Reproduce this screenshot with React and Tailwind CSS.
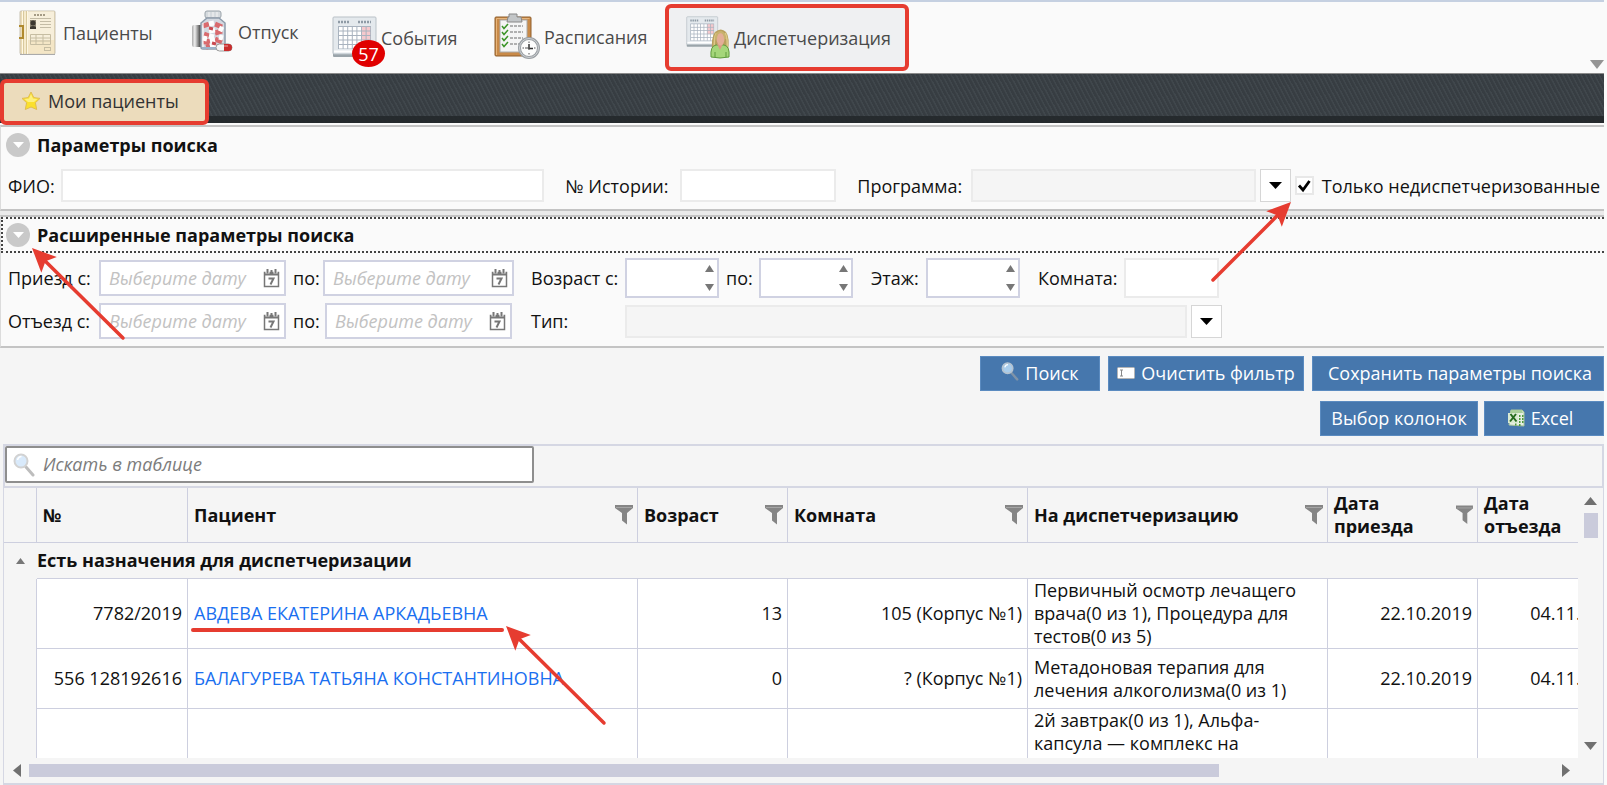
import { useState } from "react";

const columns = [
  { key: "number", title: "№", filter: false, align: "text-right" },
  { key: "patient", title: "Пациент", filter: true, align: "text-left" },
  { key: "age", title: "Возраст", filter: true, align: "text-right" },
  { key: "room", title: "Комната", filter: true, align: "text-right" },
  { key: "tasks", title: "На диспетчеризацию", filter: true, align: "text-left" },
  { key: "arrival", title: "Дата приезда", filter: true, align: "text-right" },
  { key: "departure", title: "Дата отъезда", filter: true, align: "text-right" }
];

const rows = [
  {
    number: "7782/2019",
    patient: "АВДЕВА ЕКАТЕРИНА АРКАДЬЕВНА",
    age: "13",
    room: "105 (Корпус №1)",
    tasks: "Первичный осмотр лечащего врача(0 из 1), Процедура для тестов(0 из 5)",
    arrival: "22.10.2019",
    departure: "04.11.2019",
    valign: "align-middle"
  },
  {
    number: "556 128192616",
    patient: "БАЛАГУРЕВА ТАТЬЯНА КОНСТАНТИНОВНА",
    age: "0",
    room: "? (Корпус №1)",
    tasks: "Метадоновая терапия для лечения алкоголизма(0 из 1)",
    arrival: "22.10.2019",
    departure: "04.11.2019",
    valign: "align-middle"
  },
  {
    number: "",
    patient: "",
    age: "",
    room: "",
    tasks: "2й завтрак(0 из 1), Альфа-капсула — комплекс на",
    arrival: "",
    departure: "",
    valign: "align-top"
  }
];

/* ---------- Icons ---------- */

function PatientsIcon() {
  return (
    <svg width="37" height="46" viewBox="0 0 37 46">
      <rect x="1" y="1" width="35" height="43" rx="1" fill="#ecdcb4" stroke="#c9c2b2" />
      <rect x="8" y="1.500" width="27" height="42" fill="#f7efdb" />
      <path d="M8 30h27v13.500H8z" fill="#f2e3bd" opacity=".7" />
      <path d="M3.500 1v43M6 1v43M8.500 1v43" stroke="#fff8e4" />
      <path d="M4.500 1v43M7.500 1v43" stroke="#d9c99c" />
      <path d="M0 16h4v12H0" fill="none" stroke="#b08a2e" strokeWidth="2" />
      <path d="M15 5h12" stroke="#8a8069" strokeWidth="1.500" strokeDasharray="2 1" />
      <path d="M11 8.500h21M21 11.500h11M21 14.500h11M21 17.500h11" stroke="#c4bca6" />
      <rect x="11" y="10" width="6" height="9" fill="#8c8471" />
      <circle cx="14" cy="13" r="2.500" fill="#3d382f" />
      <path d="M11 19v-2q3-2 6 0v2z" fill="#3d382f" />
      <path d="M11.500 24.500h20v10h-20zM11.500 28h20M11.500 31h20M17 24.500v10M24 24.500v10" fill="none" stroke="#c6bda2" />
      <rect x="25.500" y="37.500" width="6" height="3" fill="none" stroke="#c6bda2" />
      <path d="M1 44.500h35" stroke="#aaa" />
    </svg>
  );
}

function PillsIcon() {
  return (
    <svg width="42" height="44" viewBox="0 0 42 44">
      <defs>
        <linearGradient id="cap">
          <stop offset="0" stopColor="#aaa" />
          <stop offset=".2" stopColor="#eee" />
          <stop offset=".6" stopColor="#444" />
          <stop offset="1" stopColor="#222" />
        </linearGradient>
      </defs>
      <rect x="1" y="15" width="14" height="22" rx="2" fill="url(#cap)" />
      <rect x="14" y="1" width="16" height="7" rx="2" fill="#d5dade" stroke="#9aa3aa" />
      <path d="M18 2v5M22 2v5M26 2v5" stroke="#f4f4f4" />
      <path d="M16 8h12l6 5v24q0 2-2 2H12q-2 0-2-2V13z" fill="#d3d8e0" stroke="#8e9cab" strokeWidth="1.500" />
      <g strokeWidth="5">
        <path d="M12 16l6-2M24 14l7 3M13 24l5 2M24 23l7-2M12 32l7-1M24 29l7 3M15 37l4-1M26 37l5-1" stroke="#d96a6e" />
        <path d="M18 14l5-1M28 18l4 2M18 26l5 1M18 21l6-1M19 31l5-1M28 27l4 1M19 36l6-1M12 28l4 1" stroke="#fdfdfd" />
        <path d="M18 18l4 1M21 33l4 1" stroke="#c94a50" strokeWidth="3" />
      </g>
      <path d="M12 13v24" stroke="#fff" strokeWidth="1.500" opacity=".7" />
      <path d="M11 38h22" stroke="#9db2c8" strokeWidth="2" />
      <rect x="25" y="34" width="16" height="7" rx="3.500" fill="#f4f4f4" stroke="#999" />
      <path d="M33 34h4.500a3.500 3.500 0 0 1 0 7H33z" fill="#c92c2c" />
      <path d="M27 36h10" stroke="#fff" opacity=".6" />
    </svg>
  );
}

function CalendarDrawing() {
  return (
    <g>
      <path d="M1 36h43v4q0 1-1 1H2q-1 0-1-1z" fill="#9aa4aa" />
      <rect x="1" y="1" width="43" height="37" rx="1" fill="#e4e9ed" stroke="#b9c1c7" />
      <path d="M2 35.500h41" stroke="#fff" strokeWidth="2" />
      <path d="M6 6h11M26 6h13" stroke="#8f9ba6" strokeWidth="2.500" strokeDasharray="2 1" />
      <rect x="6" y="10" width="33" height="23" fill="#a9b3bf" />
      <g fill="#fff">
        {[0, 1, 2, 3, 4].map((r) =>
          [0, 1, 2, 3, 4, 5, 6].map((c) => (
            <rect
              key={r + "-" + c}
              x={7 + c * 4.6}
              y={11 + r * 4.5}
              width="3.600"
              height="3.500"
              fill={c > 4 && r < 3 ? "#f6c9cd" : "#fff"}
            />
          ))
        )}
      </g>
    </g>
  );
}

function EventsIcon() {
  return (
    <svg width="45" height="43" viewBox="0 0 45 43">
      <CalendarDrawing />
    </svg>
  );
}

function ScheduleIcon() {
  return (
    <svg width="46" height="47" viewBox="0 0 46 47">
      <rect x="1" y="4" width="36" height="39" rx="1" fill="#c98a48" stroke="#8f5f2c" />
      <path d="M2.500 42V5.500h33" fill="none" stroke="#e7b57b" />
      <rect x="6" y="7" width="27" height="32" fill="#f5f5f5" stroke="#aaa" />
      <path d="M15 1h8v3h4l1 5H13l1-5h1z" fill="#c3c6c8" stroke="#888" />
      <path d="M8 13l2 2.500 4-4.500M8 19l2 2.500 4-4.500M8 25l2 2.500 4-4.500M8 31l2 2.500 4-4.500" fill="none" stroke="#3b9427" strokeWidth="1.500" />
      <path d="M16 13h13M16 19h13M16 25h13M16 31h9" stroke="#999" strokeWidth="1.500" strokeDasharray="3 1" />
      <circle cx="35" cy="35" r="9.500" fill="#fdfdfd" stroke="#9a9fa3" strokeWidth="3" />
      <circle cx="35" cy="35" r="9.500" fill="none" stroke="#cfd2d5" />
      <path d="M35 31v4.500h4" fill="none" stroke="#333" strokeWidth="1.500" />
      <path d="M35 28.500v1.500M35 40v1.500M28.500 35h1.500M40 35h1.500M31 35h4v2" fill="none" stroke="#555" />
    </svg>
  );
}

function DispatchIcon() {
  return (
    <svg width="44" height="43" viewBox="0 0 44 43">
      <g transform="scale(.72 .75)">
        <CalendarDrawing />
      </g>
      <path d="M26 36q-1-15 3-20 6-5 11 0 4 5 2 20z" fill="#b9a05e" />
      <path d="M28.500 34q-1-12 2-17M41 33q1-11-2-16" fill="none" stroke="#dcc987" strokeWidth="1.500" />
      <path d="M25 41q-1-11 5-12h8q6 1 5 12-9 2-18 0z" fill="#a5d67a" stroke="#5f9a3c" />
      <path d="M31 28h6l-3 6z" fill="#d79b82" />
      <ellipse cx="34.500" cy="23" rx="4" ry="6.500" fill="#e3ae97" />
      <path d="M30 23q0-7 5-7 4 1 4 7" fill="none" stroke="#c9b26e" strokeWidth="2" />
      <path d="M29 41v-5M40 41v-5" stroke="#5f9a3c" />
    </svg>
  );
}

function StarIcon() {
  return (
    <svg width="20" height="20" viewBox="0 0 20 20">
      <path
        d="M10 1l2.800 5.600 6.200.8-4.600 4.300 1.300 6.800L10 16l-5.700 2.500 1.300-6.800L1 7.400l6.200-.8z"
        fill="#fbe02c"
        stroke="#e0bd52"
        strokeLinejoin="round"
      />
      <path d="M10 3l2 4.500 4.500.5-3.500 3H7L3.500 8 8 7.500z" fill="#fff6a0" opacity=".7" />
    </svg>
  );
}

function MagnifierIcon({ light, className }) {
  return (
    <svg viewBox="0 0 22 25" className={className}>
      <path d="M13 15l7 8" stroke={light ? "#bdbdbd" : "#7f93a8"} strokeWidth="3" strokeLinecap="round" />
      <circle cx="8" cy="9" r="6.500" fill={light ? "#d9eafb" : "#a9cdec"} stroke={light ? "#d2d2d2" : "#b5c3d0"} strokeWidth="2" />
      <path d="M4.500 8q1-3.500 4-3.500" fill="none" stroke="#fff" strokeWidth="1.500" />
    </svg>
  );
}

function ClearIcon() {
  return (
    <svg width="18" height="12" viewBox="0 0 18 12">
      <rect x=".5" y=".5" width="17" height="11" rx="1" fill="#fff" stroke="#b5b5b5" />
      <path d="M3 3h3M3 9h3M4.500 3v6" stroke="#888" />
    </svg>
  );
}

function ExcelIcon() {
  return (
    <svg width="18" height="18" viewBox="0 0 18 18">
      <path d="M4 1h11l2 2v14L2 16z" fill="#e6efe2" stroke="#a8c49c" />
      <path d="M4 1h11l1 3H3z" fill="#a9cf9a" />
      <rect x="1" y="4" width="10" height="10" fill="#d9ead2" />
      <path d="M3.500 5l6 7.500M9 5l-6 7.500" stroke="#256b1e" strokeWidth="2" />
      <path d="M12 7h1.500M15 7h1.500M12 10h1.500M15 10h1.500M12 13h1.500M15 13h1.500M8 15.500h1.500M12 16h1.500" stroke="#4f9a3c" strokeWidth="2" />
    </svg>
  );
}

function DateIcon() {
  return (
    <svg width="17" height="20" viewBox="0 0 17 20">
      <path d="M1.500 4.500h14v14h-14z" fill="#fff" stroke="#777" strokeWidth="1.500" />
      <path d="M1 4h15v3.500H1z" fill="#777" />
      <path d="M4.500 0v5.500M12.500 0v5.500" stroke="#fff" strokeWidth="4" />
      <path d="M4.500 1v4.500M12.500 1v4.500" stroke="#777" strokeWidth="2" />
      <path d="M8.500 2v4" stroke="#777" strokeWidth="2" />
      <path d="M5.500 10.500h5l-3 6" fill="none" stroke="#777" strokeWidth="2" />
    </svg>
  );
}

function FilterIcon() {
  return (
    <svg width="18" height="20" viewBox="0 0 18 20">
      <path d="M0 0h18v3l-6 5v11.500l-5-4V8L0 3z" fill="#858585" />
      <path d="M1 2.500h16" stroke="#a5a5a5" />
    </svg>
  );
}

function Triangle({ dir, className }) {
  const points = {
    up: "0,8 5,0 10,8",
    down: "0,0 10,0 5,8",
    left: "8,0 8,10 0,5",
    right: "0,0 8,5 0,10"
  };
  const flat = dir === "up" || dir === "down";
  return (
    <svg viewBox={flat ? "0 0 10 8" : "0 0 8 10"} preserveAspectRatio="none" className={className}>
      <polygon points={points[dir]} fill="currentColor" />
    </svg>
  );
}

/* ---------- Form parts ---------- */

function TextField({ id, className }) {
  return (
    <input
      id={id}
      type="text"
      className={`min-w-0 border-2 border-[#ebebeb] bg-white indent-2 outline-none ${className}`}
    />
  );
}

function DropDown({ id, className }) {
  return (
    <div className={`flex min-w-0 gap-1 ${className}`}>
      <select
        id={id}
        className="h-[33px] min-w-0 flex-1 appearance-none border-2 border-[#ebebeb] bg-[#f5f5f5] outline-none"
      >
        <option value=""></option>
      </select>
      <button
        type="button"
        aria-label="Открыть список"
        className="flex h-[33px] w-[31px] items-center justify-center border border-[#d6d6d6] bg-white"
      >
        <Triangle dir="down" className="h-[7px] w-[13px] text-black" />
      </button>
    </div>
  );
}

function DateField({ id }) {
  return (
    <div className="flex h-[36px] items-center border-2 border-[#d0d2e2] bg-white pr-1">
      <input
        id={id}
        type="text"
        placeholder="Выберите дату"
        className="min-w-0 flex-1 pl-2 italic outline-none placeholder:text-[#c2c2c2]"
      />
      <button type="button" aria-label="Календарь">
        <DateIcon />
      </button>
    </div>
  );
}

function NumberField({ id }) {
  return (
    <div className="flex h-[40px] w-[94px] border-2 border-[#d0d2e2] bg-white">
      <input id={id} type="text" className="min-w-0 flex-1 px-2 outline-none" />
      <div className="flex w-4 flex-col items-center justify-between py-[5px]">
        <button type="button" aria-label="Больше" className="flex">
          <Triangle dir="up" className="h-[7px] w-[9px] text-[#777]" />
        </button>
        <button type="button" aria-label="Меньше" className="flex">
          <Triangle dir="down" className="h-[7px] w-[9px] text-[#777]" />
        </button>
      </div>
    </div>
  );
}

function Section({ title, focused, children }) {
  const [open, setOpen] = useState(true);
  return (
    <section className="border-y-2 border-l border-[#c4c4c4] border-l-[#dcdcdc] bg-[#fafafa]">
      <button
        type="button"
        onClick={() => setOpen(!open)}
        className={`flex h-[36px] w-full items-center gap-[7px] pl-[3px] text-lg font-bold ${
          focused ? "border-2 border-r-0 border-dotted border-[#444]" : "border-2 border-transparent"
        }`}
      >
        <span className="flex size-6 items-center justify-center rounded-full bg-[#c9c9c9]">
          <Triangle dir="down" className="h-[6px] w-[11px] text-white" />
        </span>
        {title}
      </button>
      {open && children}
    </section>
  );
}

function ActionButton({ children, className }) {
  return (
    <button
      type="button"
      className={`flex h-[35px] items-center justify-center gap-[6px] border border-[#5b8bc0] bg-[#4677ad] pb-[2px] text-white ${className}`}
    >
      {children}
    </button>
  );
}

function NavButton({ icon, title, className }) {
  return (
    <button type="button" className={`flex items-center text-[#4a4a4a] ${className}`}>
      {icon}
      {title}
    </button>
  );
}

/* Red pointer: a line from (x1, y1) to a swept head at (x2, y2) */
function Pointer({ x1, y1, x2, y2 }) {
  const angle = (Math.atan2(y2 - y1, x2 - x1) * 180) / Math.PI;
  const length = Math.hypot(x2 - x1, y2 - y1);
  return (
    <g transform={`translate(${x2} ${y2}) rotate(${angle})`}>
      <line x1={-length} y1="0" x2="-16" y2="0" stroke="#e63c30" strokeWidth="3.500" strokeLinecap="round" />
      <path d="M0 0L-24 -11L-19 0L-24 11Z" fill="#e63c30" />
    </g>
  );
}

export default function App() {
  const [onlyNew, setOnlyNew] = useState(true);

  return (
    <div className="relative flex h-screen flex-col overflow-hidden bg-[#fafafa] pr-[3px] font-['Open_Sans','Noto_Sans',sans-serif] text-lg text-[#111]">

      {/* Main menu */}
      <header className="relative flex h-[74px] shrink-0 items-start border-t-2 border-b border-t-[#c5d0e1] border-b-[#8a8a8a]">
        <NavButton icon={<PatientsIcon />} title="Пациенты" className="mt-2 ml-[19px] w-[172px] gap-[7px]" />
        <NavButton icon={<PillsIcon />} title="Отпуск" className="mt-2 w-[141px] gap-[5px]" />
        <div className="relative mt-[14px] w-[162px]">
          <NavButton icon={<EventsIcon />} title="События" className="gap-1" />
          <span className="absolute top-6 left-5 flex h-[27px] w-[33px] items-center justify-center rounded-[50%] bg-[#e00000] text-white">
            57
          </span>
        </div>
        <NavButton icon={<ScheduleIcon />} title="Расписания" className="mt-[11px] w-[171px] gap-1" />
        <NavButton
          icon={<DispatchIcon />}
          title="Диспетчеризация"
          className="mt-[2px] h-[67px] w-[244px] gap-1 rounded-md border-4 border-[#e63c30] bg-[#eff0f2] pl-[17px]"
        />
        <Triangle dir="down" className="absolute right-0 bottom-1 h-[9px] w-[14px] text-[#949494]" />
      </header>

      {/* Tabs */}
      <nav className="h-[49px] shrink-0 border-b-[7px] border-[#23282b]/90 bg-[repeating-linear-gradient(62deg,#373d42_0px,#373d42_2px,#40474c_3px,#40474c_4px)]">
        <button
          type="button"
          className="relative mt-[5px] flex h-[46px] w-[209px] items-center gap-[7px] rounded-md border-4 border-[#e63c30] bg-[#ecdcbc] pb-[2px] pl-[17px] text-[#333]"
        >
          <StarIcon />
          Мои пациенты
        </button>
      </nav>

      {/* Filters */}
      <form className="mt-[2px] flex shrink-0 flex-col gap-1 bg-[#ebebeb]">
        <Section title="Параметры поиска">
          <div className="flex items-center pt-[6px] pr-1 pb-[7px] pl-[7px]">
            <label htmlFor="fio" className="w-[53px]">ФИО:</label>
            <TextField id="fio" className="h-[33px] flex-3" />
            <label htmlFor="history" className="ml-[21px] w-[115px] whitespace-nowrap">№ Истории:</label>
            <TextField id="history" className="h-[33px] w-[156px]" />
            <label htmlFor="program" className="ml-[21px] w-[114px] whitespace-nowrap">Программа:</label>
            <DropDown id="program" className="flex-2" />
            <label className="ml-1 flex items-center gap-2 whitespace-nowrap">
              <span className="relative flex">
                <input
                  type="checkbox"
                  checked={onlyNew}
                  onChange={(e) => setOnlyNew(e.target.checked)}
                  className="size-[19px] appearance-none border-2 border-[#e8e8e8] bg-white"
                />
                {onlyNew && (
                  <svg viewBox="0 0 19 19" className="pointer-events-none absolute inset-0 size-[19px]">
                    <path d="M4 9.500l4 4.500 6.500-9" fill="none" stroke="#000" strokeWidth="2.800" />
                  </svg>
                )}
              </span>
              Только недиспетчеризованные
            </label>
          </div>
        </Section>

        <Section title="Расширенные параметры поиска" focused>
          <div className="grid grid-cols-[91px_187px_37px_191px_111px_1fr] items-center gap-y-[5px] pt-[5px] pb-[7px] pl-[7px]">
            <label htmlFor="arrivalFrom">Приезд с:</label>
            <DateField id="arrivalFrom" />
            <label htmlFor="arrivalTo" className="pl-[7px]">по:</label>
            <DateField id="arrivalTo" />
            <label htmlFor="ageFrom" className="pl-[17px]">Возраст с:</label>
            <div className="flex items-center">
              <NumberField id="ageFrom" />
              <label htmlFor="ageTo" className="w-[40px] pl-[7px]">по:</label>
              <NumberField id="ageTo" />
              <label htmlFor="floor" className="w-[73px] pl-[18px]">Этаж:</label>
              <NumberField id="floor" />
              <label htmlFor="room" className="w-[104px] pl-[18px]">Комната:</label>
              <TextField id="room" className="h-[40px] w-[95px]" />
            </div>

            <label htmlFor="departureFrom">Отъезд с:</label>
            <DateField id="departureFrom" />
            <label htmlFor="departureTo" className="pl-[7px]">по:</label>
            <div className="px-[2px]">
              <DateField id="departureTo" />
            </div>
            <label htmlFor="type" className="pl-[17px]">Тип:</label>
            <DropDown id="type" className="max-w-[597px]" />
          </div>
        </Section>
      </form>

      {/* Actions */}
      <div className="flex shrink-0 flex-col gap-[10px] bg-[#f5f5f5] py-2">
        <div className="flex justify-end gap-2">
          <ActionButton className="w-[120px]">
            <MagnifierIcon className="mb-1 h-[20px] w-[18px]" />
            Поиск
          </ActionButton>
          <ActionButton className="w-[196px]">
            <ClearIcon />
            Очистить фильтр
          </ActionButton>
          <ActionButton className="w-[292px] pl-1">Сохранить параметры поиска</ActionButton>
        </div>
        <div className="flex justify-end gap-[6px]">
          <ActionButton className="w-[158px]">Выбор колонок</ActionButton>
          <ActionButton className="w-[120px] pr-2">
            <ExcelIcon />
            Excel
          </ActionButton>
        </div>
      </div>

      {/* Patients table */}
      <div className="flex min-h-0 flex-1 flex-col bg-[#f5f5f5] pl-[3px]">
        <div className="shrink-0 border-2 border-[#d5d7e3] pb-[3px]">
          <div className="flex h-[37px] w-[529px] items-center gap-2 rounded-xs border-2 border-[#8e8e8e] bg-white pl-[6px]">
            <MagnifierIcon light className="h-[25px] w-[22px]" />
            <input
              type="search"
              aria-label="Искать в таблице"
              placeholder="Искать в таблице"
              className="min-w-0 flex-1 pb-[2px] italic outline-none placeholder:text-[#7c7c7c]"
            />
          </div>
        </div>

        <div className="flex min-h-0 flex-1 border-x border-b-2 border-[#d5d7e3]">
          <div className="flex min-w-0 flex-1 flex-col">
            <div className="min-h-0 flex-1 overflow-auto [scrollbar-width:none]">
              <table className="w-[1624px] table-fixed border-separate border-spacing-0 leading-[23px]">
                <colgroup>
                  <col className="w-[33px]" />
                  <col className="w-[151px]" />
                  <col className="w-[450px]" />
                  <col className="w-[150px]" />
                  <col className="w-[240px]" />
                  <col className="w-[300px]" />
                  <col className="w-[150px]" />
                  <col className="w-[150px]" />
                </colgroup>
                <thead>
                  <tr>
                    <th className="border-r border-b border-[#cdcfdf]"></th>
                    {columns.map((col) => (
                      <th key={col.key} className="h-[55px] border-r border-b border-[#cdcfdf] pr-1 pl-[6px] text-left font-bold">
                        <div className="flex items-center justify-between">
                          {col.title}
                          {col.filter && <FilterIcon />}
                        </div>
                      </th>
                    ))}
                  </tr>
                </thead>
                <tbody>
                  <tr>
                    <td className="h-[36px]">
                      <button type="button" aria-label="Свернуть группу" className="flex w-full justify-center">
                        <Triangle dir="up" className="h-[6px] w-[9px] text-[#777]" />
                      </button>
                    </td>
                    <td colSpan={7} className="border-b border-[#cdcfdf] font-bold">
                      Есть назначения для диспетчеризации
                    </td>
                  </tr>
                  {rows.map((row, i) => (
                    <tr key={i}>
                      <td className="border-r border-[#cdcfdf]"></td>
                      {columns.map((col) => (
                        <td
                          key={col.key}
                          className={`h-[60px] border-r border-b border-[#cdcfdf] bg-white pr-[5px] pl-[6px] ${col.align} ${row.valign}`}
                        >
                          {col.key === "patient" ? (
                            <a href="#patient" className="whitespace-nowrap text-[#1a6ff0]">
                              {row.patient}
                            </a>
                          ) : (
                            row[col.key]
                          )}
                        </td>
                      ))}
                    </tr>
                  ))}
                </tbody>
              </table>
            </div>

            <div className="flex h-[25px] shrink-0 items-center gap-2 pr-2 pl-[9px]">
              <Triangle dir="left" className="h-[13px] w-[8px] text-[#707070]" />
              <div className="flex-1">
                <div className="h-[13px] w-[78%] bg-[#cacbdb]"></div>
              </div>
              <Triangle dir="right" className="h-[13px] w-[8px] text-[#707070]" />
            </div>
          </div>

          <div className="flex w-[25px] shrink-0 flex-col items-center pt-[9px] pb-[33px]">
            <Triangle dir="up" className="h-[8px] w-[13px] text-[#707070]" />
            <div className="mt-2 h-[25px] w-[14px] bg-[#cacbdb]"></div>
            <Triangle dir="down" className="mt-auto h-[8px] w-[13px] text-[#707070]" />
          </div>
        </div>
      </div>

      {/* Red hints drawn over the form */}
      <svg width="1604" height="785" className="pointer-events-none absolute top-0 left-0">
        <Pointer x1={123} y1={338} x2={32} y2={248} />
        <Pointer x1={1213} y1={280} x2={1291} y2={202} />
        <Pointer x1={604} y1={723} x2={506} y2={626} />
        <line x1="193" y1="630" x2="502" y2="630" stroke="#e63c30" strokeWidth="4" strokeLinecap="round" />
      </svg>
    </div>
  );
}
